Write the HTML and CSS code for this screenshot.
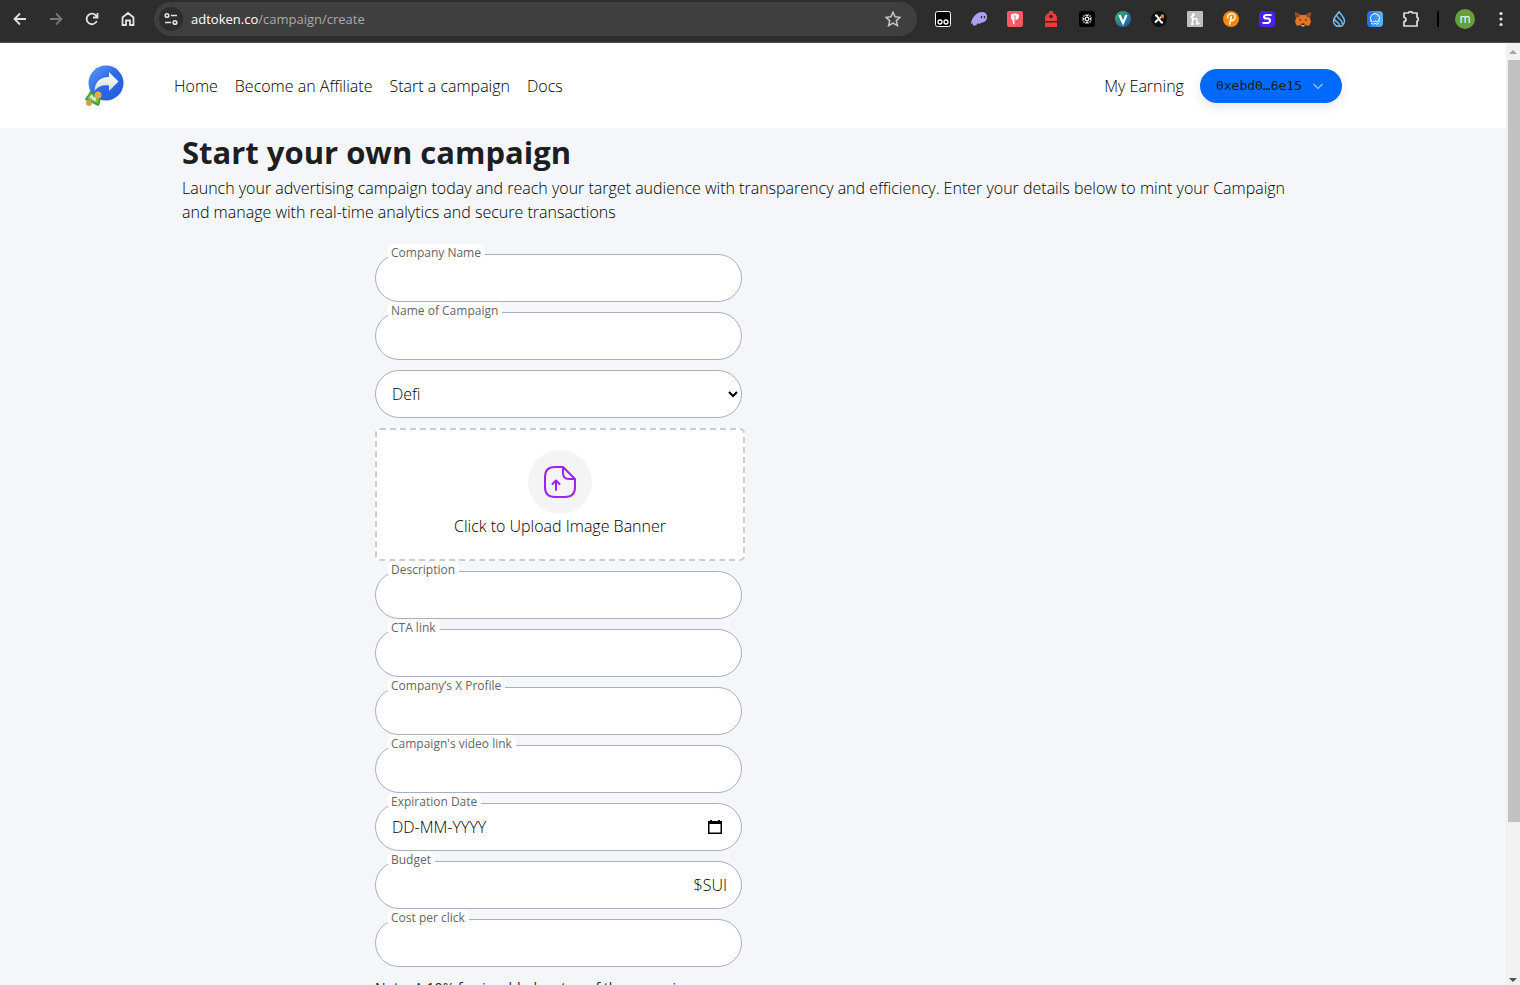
FILE: index.html
```html
<!DOCTYPE html>
<html lang="en">
<head>
  <meta charset="UTF-8">
  <meta name="viewport" content="width=device-width, initial-scale=1.0">
  <title>Start your own campaign | AdToken</title>
  <link rel="stylesheet" href="styles.css">
</head>
<body>
  <!-- Browser toolbar -->
  <div class="toolbar">
    <div class="toolbar-nav">
      <button class="tool" aria-label="Back"><svg viewBox="0 0 16 16"><path d="M14 8H3M8 2.500L2.500 8 8 13.500"/></svg></button>
      <button class="tool disabled" aria-label="Forward"><svg viewBox="0 0 16 16"><path d="M2 8h11M8 2.500L13.500 8 8 13.500"/></svg></button>
      <button class="tool" aria-label="Reload"><svg viewBox="0 0 16 16"><path d="M12.800 10A5.300 5.300 0 1 1 12.200 4.800L13.300 6M13.500 2v4.500H9"/></svg></button>
      <button class="tool" aria-label="Home"><svg viewBox="0 0 16 16"><path d="M2.500 6.500L8 2l5.500 4.500V14H10V9.500H6V14H2.500z"/></svg></button>
    </div>
    <div class="address-bar">
      <button class="site-info" aria-label="Site information"><svg viewBox="0 0 16 16"><path d="M8 4.500h6M2 11.500h6"/><circle cx="4" cy="4.500" r="1.800"/><circle cx="12" cy="11.500" r="1.800"/></svg></button>
      <span class="url">adtoken.co<span class="url-path">/campaign/create</span></span>
      <button class="tool star" aria-label="Bookmark"><svg viewBox="0 0 16 16"><path d="M8 1.200l2.100 4.600 4.900.5-3.700 3.300 1.100 5L8 12.100l-4.400 2.500 1.100-5L1 6.300l4.900-.5z"/></svg></button>
    </div>
    <div class="extensions">
      <svg viewBox="0 0 16 16"><rect x=".5" y=".5" width="15" height="15" rx="2" fill="#000" stroke="#fff"/><g fill="none" stroke="#fff" stroke-width="1.300"><circle cx="5" cy="11" r="2"/><circle cx="11" cy="11" r="2"/></g></svg>
      <svg viewBox="0 0 16 16"><path fill="#ab9ff2" d="M0 12C1 7 5 1 11 1c4 0 5.500 3 5 6-.6 3-3 5-5.500 4.500C9 13 7.800 13 7 12.300 5.600 14 4 15 2.500 14.500 1 14 2 12.500 2 12c-.5.800-2 1.500-2 0z"/><path stroke="#2d2d2d" stroke-width="1.300" d="M10.500 5v2.200M13.500 5v2.200"/></svg>
      <svg viewBox="0 0 16 16"><rect width="16" height="16" rx="2" fill="#ff5a5f"/><path fill="#fff" d="M4 3.500L7.500 2.500v7L7.500 13 6 13.500 5.500 9 4 7.500zM7.500 2.500c3-.5 5 1 4.500 3.500-.4 2-2 3-3.500 3V4.500h-1z"/></svg>
      <svg viewBox="0 0 16 16"><path fill="#e93c3e" d="M2 10V7c0-2.500 1.500-4.500 4-5V0h4v2c2.500.5 4 2.500 4 5v3zM2 11.500h12V16H2z"/><circle cx="8" cy="5.500" r="1.800" fill="#5b1719"/></svg>
      <svg viewBox="0 0 16 16"><rect width="16" height="16" rx="3" fill="#000"/><g fill="none" stroke="#eee" stroke-width="1.200"><circle cx="8" cy="8" r="1.800"/><path d="M6.500 3.500L8 5l1.500-1.500M6.500 12.500L8 11l1.500 1.500M3.500 6.500L5 8 3.500 9.500M12.500 6.500L11 8l1.500 1.500M4.500 4.500l1 1M11.500 4.500l-1 1M4.500 11.500l1-1M11.500 11.500l-1-1"/></g></svg>
      <svg viewBox="0 0 16 16"><defs><linearGradient id="vg" x2="1" y2="1"><stop stop-color="#4fae6a"/><stop offset=".5" stop-color="#248496"/><stop offset="1" stop-color="#3348c8"/></linearGradient></defs><circle cx="8" cy="8" r="8" fill="url(#vg)"/><path fill="none" stroke="#fff" stroke-width="2.200" d="M4.500 4L8 12l3.500-8"/></svg>
      <svg viewBox="0 0 16 16"><circle cx="8" cy="8" r="8" fill="#111"/><path fill="none" stroke="#fff" stroke-width="2" d="M4 4.500h1.500l5 7H12M4 11.500l3-3M9 7l1-1"/><path fill="#f47b20" d="M10 3.500h3v3l-1.500 1L9.500 6z"/></svg>
      <svg viewBox="0 0 16 16"><rect width="16" height="16" rx="1" fill="#bdbdbd"/><path fill="none" stroke="#fff" stroke-width="1.500" d="M3.500 6C5 6 7 4.500 7 3.500S5.500 2.500 5.500 5v8M4 13h3M5.500 9.500C7.500 7 10 7 10 9c0 2-.5 4 .5 4s1.500-.5 2-1.500"/></svg>
      <svg viewBox="0 0 16 16"><circle cx="8" cy="8" r="8" fill="#ff8a00"/><path fill="none" stroke="#fff" stroke-width="1.400" d="M5 7.500C3.500 4.500 6 2.700 8.500 2.700c5 0 4.500 6.800.5 6.800-1.500 0-1.700-1-1.400-2L8.500 5 6.500 13.500"/></svg>
      <svg viewBox="0 0 16 16"><rect width="16" height="16" rx="3" fill="#4b21ee"/><path fill="none" stroke="#fff" stroke-width="2" d="M12.500 4H7.500C4.500 4 4 7.500 7 7.500h2c3 0 2.500 4.500-.5 4.500h-5"/></svg>
      <svg viewBox="0 0 16 16"><path fill="#e37625" d="M0 1l6 3h4l6-3-1 6 1 4-2 4-4-1-1.500 1h-1L6 14l-4 1-2-4 1-4z"/><path fill="#8d4928" d="M0 1l5.500 3L4 6 1 7zM16 1l-5.500 3L12 6l3 1z"/><path fill="#2b2424" d="M4 8l2.500 1L5 10zM12 8l-2.500 1 1.500 1zM6.500 12.500h3v1.700h-3z"/><path fill="#d5bfb2" d="M6 14h4l-1 1.500H7z"/></svg>
      <svg viewBox="0 0 16 16"><path fill="none" stroke="#6fbcf0" stroke-width="1.500" d="M8 .8C5.500 4 2.500 7 2.500 10a5.500 5.500 0 0 0 11 0C13.500 7 10.500 4 8 .8zM6 4.500c.2 3.500 6 4 5 8.500M3.500 8C5 12 8.500 10.500 8.500 15"/></svg>
      <svg viewBox="0 0 16 16"><defs><linearGradient id="bg" x2="1"><stop stop-color="#1c69ec"/><stop offset="1" stop-color="#59b9f9"/></linearGradient></defs><rect width="16" height="16" rx="4" fill="url(#bg)"/><path fill="none" stroke="#fff" d="M4.500 10a4.500 4.500 0 1 1 7 0M3 10c1.500 0 1.500 1 2.500 1S6.800 10 8 10s1.500 1 2.500 1 1-1 2.500-1M4 12.500c1-.3 1.500.7 2.300.7S7.200 12.300 8 12.300s1 .9 1.800.9 1.200-1 2.200-.7"/></svg>
      <svg viewBox="0 0 16 16"><path fill="none" stroke="#dedede" stroke-width="1.700" stroke-linejoin="round" d="M1 2h4.500a2 1.300 0 0 1 4 0H14v4.500a1.300 1.700 0 0 1 0 3.500v5H1v-4.500a2 2 0 0 0 0-4z"/></svg>
    </div>
    <span class="divider"></span>
    <button class="profile">m</button>
    <button class="tool menu" aria-label="Menu"><svg viewBox="0 0 16 16"><circle cx="8" cy="2.500" r="1.600"/><circle cx="8" cy="8" r="1.600"/><circle cx="8" cy="13.500" r="1.600"/></svg></button>
  </div>

  <div class="viewport">
    <div class="page">
      <header class="header">
        <a href="#" class="logo" aria-label="AdToken">
          <svg viewBox="0 0 42 44">
            <defs>
              <linearGradient id="ball" x2="1" y2="1"><stop stop-color="#5b9bf8"/><stop offset=".5" stop-color="#2f68e6"/><stop offset="1" stop-color="#2459d8"/></linearGradient>
              <linearGradient id="arrow" x2="0" y2="1"><stop stop-color="#fff"/><stop offset="1" stop-color="#dcdcdc"/></linearGradient>
            </defs>
            <circle cx="22" cy="19" r="17.500" fill="url(#ball)"/>
            <path fill="url(#arrow)" d="M25 8l9.500 9.500L25 27v-5.500c-7-1-11 1-14.500 5.500.5-8.500 5-14 14.500-14z"/>
            <path fill="#3c9e32" d="M6 27c4 1 5 5 11 7l-2 8c-5-1-8-5-14-6 1-4 4-5 5-9z"/>
            <path fill="#7bc456" d="M6.500 29.500c3 1.500 4.500 4.500 8.500 6l-1.500 4C9.500 38.500 7 36 3 35z"/>
            <path fill="none" stroke="#e5f3d4" stroke-width="1.500" d="M6 34l2-2 1 3 2-1v3"/>
            <circle cx="14" cy="31" r="3.500" fill="#e9ab45"/>
            <circle cx="5" cy="39" r="3" fill="#dc9d3d"/>
          </svg>
        </a>
        <nav class="nav">
          <a href="#">Home</a>
          <a href="#">Become an Affiliate</a>
          <a href="#">Start a campaign</a>
          <a href="#">Docs</a>
        </nav>
        <div class="account">
          <a href="#">My Earning</a>
          <button class="wallet">0xebd0…6e15 <svg viewBox="0 0 12 12"><path d="M1.500 4L6 8.500 10.500 4"/></svg></button>
        </div>
      </header>

      <main class="main">
        <h1>Start your own campaign</h1>
        <p class="intro">Launch your advertising campaign today and reach your target audience with transparency and efficiency. Enter your details below to mint your Campaign and manage with real-time analytics and secure transactions</p>

        <form class="form">
          <div class="field">
            <label for="company">Company Name</label>
            <input type="text" id="company">
          </div>
          <div class="field">
            <label for="campaign">Name of Campaign</label>
            <input type="text" id="campaign">
          </div>
          <div class="field">
            <select id="category" aria-label="Category">
              <option>Defi</option>
            </select>
          </div>
          <button type="button" class="upload">
            <span class="upload-icon"><svg viewBox="0 0 32 32"><path d="M19 1H11C4 1 1 4 1 11v10c0 7 3 10 10 10h10c7 0 10-3 10-10v-8zM19 1v6c0 4 2 6 6 6h6M12 24V15M8.500 18L12 14.500 15.500 18"/></svg></span>
            Click to Upload Image Banner
          </button>
          <div class="field">
            <label for="description">Description</label>
            <input type="text" id="description">
          </div>
          <div class="field">
            <label for="cta">CTA link</label>
            <input type="text" id="cta">
          </div>
          <div class="field">
            <label for="x-profile">Company’s X Profile</label>
            <input type="text" id="x-profile">
          </div>
          <div class="field">
            <label for="video">Campaign's video link</label>
            <input type="text" id="video">
          </div>
          <div class="field">
            <label for="expiration">Expiration Date</label>
            <input type="text" id="expiration" placeholder="DD-MM-YYYY">
            <svg class="calendar" viewBox="0 0 14 14"><path d="M0 1h2V0h2v1h6V0h2v1h2v13H0zM1.500 4v8.500h11V4z"/></svg>
          </div>
          <div class="field">
            <label for="budget">Budget</label>
            <input type="text" id="budget">
            <span class="suffix">$SUI</span>
          </div>
          <div class="field">
            <label for="cost">Cost per click</label>
            <input type="text" id="cost">
          </div>
          <p class="note">Note: A 10% fee is added on top of the campaign</p>
        </form>
      </main>
    </div>

    <div class="scrollbar">
      <span class="arrow-up"></span>
      <div class="track"><div class="thumb"></div></div>
      <span class="arrow-down"></span>
    </div>
  </div>
</body>
</html>
```
FILE: styles.css
```css
:root {
  --chrome: #2d2d2d;
  --chrome-field: #3f3f3f;
  --page: #f4f6fa;
  --border: #a9afc3;
  --primary: #006aff;
  --text: #1c1e21;
}

* {
  margin: 0;
  padding: 0;
  box-sizing: border-box;
}

body {
  display: flex;
  flex-direction: column;
  height: 100vh;
  overflow: hidden;
  font-family: "Open Sans", "Noto Sans", sans-serif;
  font-size: 16px;
  font-weight: 300;
  line-height: 24px;
  color: #000;
}

button,
input,
select {
  font: inherit;
  color: inherit;
  border: none;
}

button {
  cursor: pointer;
  background: none;
}

a {
  color: #000;
  text-decoration: none;
}

/* Browser toolbar */
.toolbar {
  display: flex;
  flex: none;
  align-items: center;
  height: 43px;
  padding: 0 12px 4px;
  background: var(--chrome);
  border-bottom: 1px solid #505050;
  font-weight: 400;
}

.toolbar-nav {
  display: flex;
  gap: 20px;
  margin-right: 18px;
}

.tool {
  width: 16px;
  height: 16px;
}

.tool svg {
  display: block;
  width: 16px;
  height: 16px;
  fill: none;
  stroke: #e3e3e3;
  stroke-width: 1.8;
}

.tool.disabled svg {
  stroke: #777;
}

.address-bar {
  display: flex;
  flex: 1;
  align-items: center;
  height: 34px;
  padding: 0 16px 0 5px;
  border-radius: 17px;
  background: var(--chrome-field);
}

.site-info {
  display: flex;
  align-items: center;
  justify-content: center;
  width: 24px;
  height: 24px;
  border-radius: 50%;
  background: var(--chrome);
}

.site-info svg {
  width: 16px;
  height: 16px;
  fill: none;
  stroke: #e3e3e3;
  stroke-width: 1.6;
}

.url {
  flex: 1;
  margin-left: 8px;
  font-size: 13px;
  color: #fff;
}

.url-path {
  color: #aaa;
}

.star svg {
  stroke: #c7c7c7;
  stroke-width: 1.5;
}

.extensions {
  display: flex;
  gap: 20px;
  margin-left: 18px;
}

.extensions svg {
  width: 16px;
  height: 16px;
}

.divider {
  width: 2px;
  height: 16px;
  margin: 0 16px 0 18px;
  background: #000;
}

.profile {
  width: 20px;
  height: 20px;
  border-radius: 50%;
  background: #689f38;
  color: #fff;
  font-size: 12px;
  line-height: 18px;
}

.menu {
  margin-left: 18px;
  margin-right: -1px;
}

.menu svg {
  fill: #e3e3e3;
  stroke: none;
}

/* Page and its scrollbar */
.viewport {
  display: flex;
  flex: 1;
  min-height: 0;
}

.page {
  flex: 1;
  overflow: hidden;
  background: var(--page);
}

.scrollbar {
  display: flex;
  flex-direction: column;
  align-items: center;
  width: 14px;
  padding: 7px 0 3px;
  background: #f1f1f1;
}

.arrow-up,
.arrow-down {
  border: 4px solid transparent;
}

.arrow-up {
  border-top: none;
  border-bottom-color: #a3a3a3;
}

.arrow-down {
  border-bottom: none;
  border-top-color: #505050;
}

.track {
  flex: 1;
  align-self: flex-end;
  width: 12px;
  margin: 6px 0 11px;
}

.thumb {
  height: 84%;
  background: #c1c1c1;
}

/* Header */
.header {
  display: flex;
  align-items: center;
  height: 85px;
  padding: 0 164px 0 84px;
  background: #fff;
}

.logo svg {
  display: block;
  width: 42px;
  height: 44px;
}

.nav {
  display: flex;
  gap: 17px;
  margin-left: 48px;
}

.account {
  display: flex;
  align-items: center;
  gap: 16px;
  margin-left: auto;
}

.wallet {
  display: flex;
  align-items: center;
  gap: 10px;
  height: 34px;
  padding: 0 18px 0 16px;
  border-radius: 17px;
  background: var(--primary);
  box-shadow: 0 4px 12px rgba(0, 0, 0, 0.1);
  color: var(--text);
  font-family: "DejaVu Sans Mono", monospace;
  font-size: 13px;
}

.wallet svg {
  width: 12px;
  height: 12px;
  fill: none;
  stroke: #8fbcff;
  stroke-width: 1.5;
}

/* Campaign form */
.main {
  max-width: 1142px;
  margin: 0 auto;
}

h1 {
  color: var(--text);
  font-size: 31px;
  font-weight: 700;
  line-height: 48px;
}

.intro {
  padding-right: 20px;
}

.form {
  display: flex;
  flex-direction: column;
  gap: 10px;
  max-width: 563px;
  margin-top: 30px;
  padding-left: 193px;
}

.field {
  position: relative;
  margin-right: 3px;
}

.field input,
.field select {
  display: block;
  width: 100%;
  height: 48px;
  padding: 0 16px;
  border: 1px solid var(--border);
  border-radius: 24px;
  background: #fff;
  color: #000;
}

.field select {
  padding: 0 0 0 12px;
}

.field input::placeholder {
  color: #000;
}

/* Labels sit over the top border */
.field label {
  position: absolute;
  top: -10px;
  left: 12px;
  padding: 0 4px;
  border-radius: 8px;
  background: #fff;
  color: #666;
  font-size: 12px;
  font-weight: 400;
  line-height: 18px;
}

.calendar,
.suffix {
  position: absolute;
  top: 12px;
  right: 15px;
}

.calendar {
  top: 17px;
  right: 20px;
  width: 14px;
  height: 14px;
}

.upload {
  display: flex;
  flex-direction: column;
  align-items: center;
  padding: 20px 20px 21px;
  border: 2px dashed #ccc;
  border-radius: 5px;
  background: #fff;
}

.upload-icon {
  display: flex;
  align-items: center;
  justify-content: center;
  width: 64px;
  height: 64px;
  border-radius: 50%;
  background: #f4f4f4;
}

.upload-icon svg {
  width: 32px;
  height: 32px;
  fill: none;
  stroke: #a020f0;
  stroke-width: 2;
  stroke-linecap: round;
  stroke-linejoin: round;
}

.note {
  color: var(--text);
  font-size: 14px;
  font-weight: 500;
  line-height: 22px;
}
```
